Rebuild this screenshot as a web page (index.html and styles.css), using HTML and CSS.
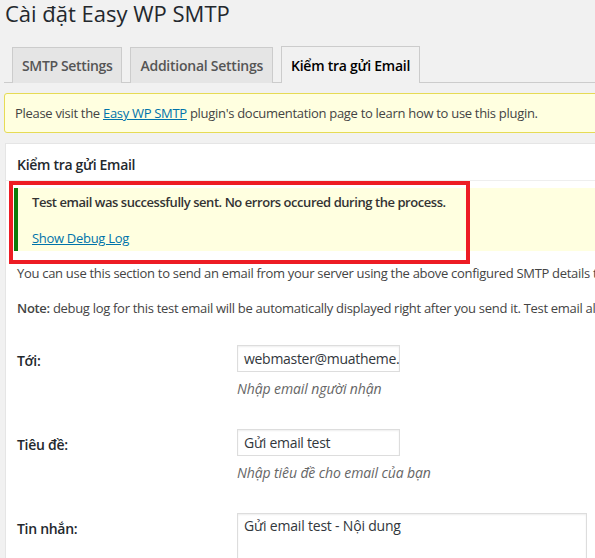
FILE: index.html
```html
<!DOCTYPE html>
<html lang="vi">
<head>
<meta charset="utf-8">
<title>Cài đặt Easy WP SMTP</title>
<link rel="stylesheet" href="styles.css">
</head>
<body>
<div class="wrap">
  <h1 class="page-title">Cài đặt Easy WP SMTP</h1>
  <div class="nav-tabs">
    <a class="nav-tab">SMTP Settings</a>
    <a class="nav-tab">Additional Settings</a>
    <a class="nav-tab active">Kiểm tra gửi Email</a>
  </div>
  <div class="notice">Please visit the <a class="link">Easy WP SMTP</a> plugin's documentation page to learn how to use this plugin.</div>
  <div class="postbox">
    <h3 class="hndle">Kiểm tra gửi Email</h3>
    <div class="inside">
      <div class="success-wrap">
        <div class="success">
          <p class="success-msg">Test email was successfully sent. No errors occured during the process.</p>
          <p class="success-link"><a class="link">Show Debug Log</a></p>
        </div>
        <div class="annot"></div>
      </div>
      <p class="intro">You can use this section to send an email from your server using the above configured SMTP details to see if the email gets delivered.</p>
      <p class="note"><strong>Note:</strong> debug log for this test email will be automatically displayed right after you send it. Test email also ignores "Enable Domain Check" option.</p>
      <div class="form">
        <div class="row">
          <div class="label">Tới:</div>
          <div class="field">
            <div class="input">webmaster@muatheme.com</div>
            <div class="desc">Nhập email người nhận</div>
          </div>
        </div>
        <div class="row">
          <div class="label">Tiêu đề:</div>
          <div class="field">
            <div class="input">Gửi email test</div>
            <div class="desc">Nhập tiêu đề cho email của bạn</div>
          </div>
        </div>
        <div class="row">
          <div class="label">Tin nhắn:</div>
          <div class="field">
            <div class="textarea">Gửi email test - Nội dung</div>
          </div>
        </div>
      </div>
    </div>
  </div>
</div>
</body>
</html>
```
FILE: styles.css
```css
html, body {
  margin: 0;
  padding: 0;
  background: #f1f1f1;
  overflow: hidden;
}
body {
  width: 595px;
  height: 558px;
  font-family: "Open Sans", "Noto Sans", sans-serif;
  font-size: 13px;
  color: #444;
}
.wrap {
  width: 1000px;
  padding-left: 4px;
}
.page-title {
  margin: 0;
  padding: 0 0 0 1px;
  font-size: 22px;
  font-weight: 400;
  line-height: 26px;
  color: #23282d;
}
.nav-tabs {
  margin-top: 21px;
  display: flex;
  border-bottom: 1px solid #ccc;
  height: 35px;
  padding-left: 8px;
  gap: 8px;
}
.nav-tab {
  display: block;
  box-sizing: border-box;
  height: 36px;
  padding: 0 9px;
  border: 1px solid #ccc;
  border-bottom: none;
  background: #e5e5e5;
  color: #555;
  font-size: 14px;
  font-weight: 600;
  line-height: 35px;
  letter-spacing: -0.25px;
}
.nav-tab:first-child {
  letter-spacing: -0.35px;
}
.nav-tab.active {
  background: #f1f1f1;
  color: #000;
  height: 37px;
  margin-top: -1px;
  line-height: 37px;
  position: relative;
  z-index: 1;
}
.notice {
  margin-top: 10px;
  box-sizing: border-box;
  height: 40px;
  background: #ffffe0;
  border: 1px solid #e6db55;
  border-radius: 3px;
  padding: 0 10px;
  line-height: 38px;
  white-space: nowrap;
  letter-spacing: -0.3px;
}
.link {
  color: #0073aa;
  text-decoration: underline;
}
.postbox {
  margin-top: 10px;
  margin-left: 1px;
  background: #fff;
  border: 1px solid #e5e5e5;
  height: 500px;
}
.hndle {
  margin: 0;
  height: 36px;
  border-bottom: 1px solid #eee;
  padding: 0 11px;
  font-size: 14px;
  font-weight: 600;
  line-height: 42px;
  color: #23282d;
  letter-spacing: -0.3px;
}
.inside {
  padding: 0 11px;
}
.success-wrap {
  position: relative;
  margin-top: 7px;
  margin-left: -3px;
}
.success {
  box-sizing: border-box;
  height: 63px;
  background: #ffffe0;
  border-left: 4px solid #0a7d0a;
  padding: 4px 0 0 14px;
}
.success p {
  margin: 0;
  line-height: 20px;
  letter-spacing: -0.3px;
  white-space: nowrap;
}
.success-msg {
  font-weight: 600;
  color: #333;
  letter-spacing: -0.45px !important;
}
.success-link {
  margin-top: 16px !important;
}
.annot {
  position: absolute;
  left: -5px;
  top: -7px;
  width: 461px;
  height: 83px;
  box-sizing: border-box;
  border: 4px solid #ed1c24;
}
.intro, .note {
  margin: 12px 0 0;
  line-height: 20px;
  white-space: nowrap;
  letter-spacing: -0.3px;
}
.note {
  margin-top: 15px;
}
.note strong {
  font-weight: 600;
}
.form {
  margin-top: 12px;
}
.row {
  display: flex;
  padding: 15px 0 16px;
}
.label {
  width: 220px;
  flex: none;
  padding-top: 2px;
  font-size: 14px;
  font-weight: 600;
  color: #23282d;
  line-height: 27px;
  letter-spacing: -0.3px;
}
.field {
  display: flex;
  flex-direction: column;
}
.input {
  box-sizing: border-box;
  width: 163px;
  height: 27px;
  border: 1px solid #ddd;
  box-shadow: inset 0 1px 2px rgba(0,0,0,0.07);
  background: #fff;
  padding: 0 6px;
  font-size: 14px;
  line-height: 25px;
  color: #32373c;
  overflow: hidden;
  white-space: nowrap;
  letter-spacing: -0.3px;
}
.desc {
  margin-top: 6px;
  margin-bottom: -2px;
  font-size: 14px;
  line-height: 22px;
  font-style: italic;
  color: #666;
  letter-spacing: -0.1px;
}
.textarea {
  box-sizing: border-box;
  width: 350px;
  height: 90px;
  border: 1px solid #ddd;
  box-shadow: inset 0 1px 2px rgba(0,0,0,0.07);
  background: #fff;
  padding: 2px 6px;
  font-size: 14px;
  line-height: 20px;
  color: #32373c;
  letter-spacing: -0.2px;
}
```
